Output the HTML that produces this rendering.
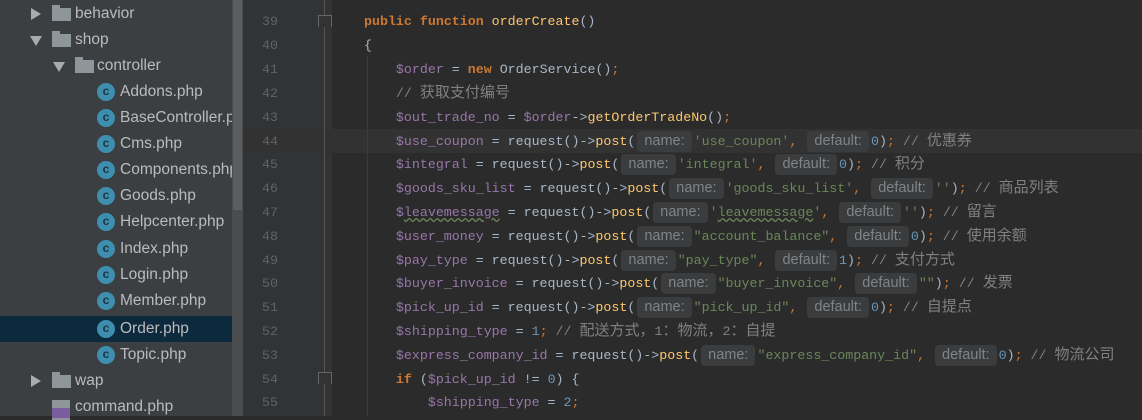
<!DOCTYPE html><html><head><style>
body{margin:0;width:1142px;height:416px;overflow:hidden;background:#2b2b2b;position:relative;font-family:"Liberation Sans",sans-serif}
#side{position:absolute;left:0;top:0;width:232px;height:416px;background:#3c3f41}
#sb{position:absolute;left:232px;top:0;width:11px;height:416px;background:#4a4d4f}
#sbt{position:absolute;left:233px;top:0;width:9px;height:210px;background:#5b5e60}
#gut{position:absolute;left:243px;top:0;width:89px;height:416px;background:#313335}
.row{position:absolute;left:0;width:243px;height:26px;line-height:26px;color:#bbbbbb;font-size:15.5px;white-space:nowrap;overflow:hidden}
.sel{background:#0d293e}
.tri{position:absolute;width:0;height:0}
.tr{border-top:6px solid transparent;border-bottom:6px solid transparent;border-left:10px solid #a9abad;top:7px}
.td{border-left:6px solid transparent;border-right:6px solid transparent;border-top:10px solid #a9abad;top:9px}
.fold{position:absolute;width:19px;height:13px;background:#8f9699;top:7px}
.fold:before{content:"";position:absolute;left:0;top:-3px;width:8px;height:3px;background:#8f9699}
.ci{position:absolute;left:97px;top:4px;width:18px;height:18px;border-radius:50%;background:#3e8eaf;color:#1e3440;font-size:12px;line-height:17px;text-align:center;font-weight:bold}
.ln{position:absolute;left:262px;color:#606366;font-family:"Liberation Mono",monospace;font-size:13.3px;height:24px;line-height:24px;margin-top:1px}
.code{position:absolute;left:364px;font-family:"Liberation Mono","Noto Sans CJK SC",monospace;font-size:13.3px;color:#a9b7c6;white-space:pre;height:24px;line-height:24px;margin-top:1px}
.k{color:#cc7832;font-weight:bold}.v{color:#9876aa}.f{color:#ffc66d}.s{color:#6a8759}.c{color:#808080}.n{color:#6897bb}.o{color:#cc7832}
.c b{font-weight:normal;font-size:15px}
.h{display:inline-block;background:#3b3c3d;color:#7f8487;font-family:"Liberation Sans",sans-serif;font-size:14.5px;line-height:21px;padding:0 7px;border-radius:4px;margin:0 2px;vertical-align:0px}
.u{text-decoration:underline wavy #6a8759}
.fm{position:absolute;left:318px;width:12px;height:11px;border:1px solid #666;border-bottom:none;background:#313335}
</style></head><body>
<div id="side">
<div class="row" style="top:1px"><div class="tri tr" style="left:31px"></div><div class="fold" style="left:52px"></div><span style="position:absolute;left:75px">behavior</span></div>
<div class="row" style="top:27px"><div class="tri td" style="left:30px"></div><div class="fold" style="left:52px"></div><span style="position:absolute;left:75px">shop</span></div>
<div class="row" style="top:53px"><div class="tri td" style="left:53px"></div><div class="fold" style="left:75px"></div><span style="position:absolute;left:97px">controller</span></div>
<div class="row" style="top:79px"><div class="ci">c</div><span style="position:absolute;left:120px">Addons.php</span></div>
<div class="row" style="top:105px"><div class="ci">c</div><span style="position:absolute;left:120px">BaseController.php</span></div>
<div class="row" style="top:131px"><div class="ci">c</div><span style="position:absolute;left:120px">Cms.php</span></div>
<div class="row" style="top:157px"><div class="ci">c</div><span style="position:absolute;left:120px">Components.php</span></div>
<div class="row" style="top:183px"><div class="ci">c</div><span style="position:absolute;left:120px">Goods.php</span></div>
<div class="row" style="top:209px"><div class="ci">c</div><span style="position:absolute;left:120px">Helpcenter.php</span></div>
<div class="row" style="top:236px"><div class="ci">c</div><span style="position:absolute;left:120px">Index.php</span></div>
<div class="row" style="top:262px"><div class="ci">c</div><span style="position:absolute;left:120px">Login.php</span></div>
<div class="row" style="top:288px"><div class="ci">c</div><span style="position:absolute;left:120px">Member.php</span></div>
<div class="row sel" style="top:316px"><div class="ci">c</div><span style="position:absolute;left:120px">Order.php</span></div>
<div class="row" style="top:342px"><div class="ci">c</div><span style="position:absolute;left:120px">Topic.php</span></div>
<div class="row" style="top:368px"><div class="tri tr" style="left:31px"></div><div class="fold" style="left:52px"></div><span style="position:absolute;left:75px">wap</span></div>
<div class="row" style="top:394px"><div style="position:absolute;left:52px;top:6px;width:18px;height:20px;background:#8f9699"></div><div style="position:absolute;left:52px;top:14px;width:18px;height:10px;background:#7a5d9c"></div><span style="position:absolute;left:75px">command.php</span></div>
</div>
<div id="sb"></div><div id="sbt"></div>
<div id="gut"></div>
<div style="position:absolute;left:243px;top:129px;width:899px;height:24px;background:#323232"></div>
<div style="position:absolute;left:324px;top:0;width:1px;height:416px;background:#555"></div>
<div class="fm" style="top:15px"></div>
<div class="fm" style="top:372px"></div>
<div style="position:absolute;left:367px;top:56px;width:1px;height:360px;background:#3b3b3b"></div>

<div class="ln" style="top:9px">39</div><div class="ln" style="top:33px">40</div><div class="ln" style="top:57px">41</div><div class="ln" style="top:81px">42</div><div class="ln" style="top:105px">43</div><div class="ln" style="top:129px">44</div><div class="ln" style="top:152px">45</div><div class="ln" style="top:176px">46</div><div class="ln" style="top:200px">47</div><div class="ln" style="top:224px">48</div><div class="ln" style="top:248px">49</div><div class="ln" style="top:271px">50</div><div class="ln" style="top:295px">51</div><div class="ln" style="top:319px">52</div><div class="ln" style="top:343px">53</div><div class="ln" style="top:367px">54</div><div class="ln" style="top:390px">55</div>

<div class="code" style="top:9px"><span class="k">public function </span><span class="f">orderCreate</span>()</div>
<div class="code" style="top:33px">{</div>
<div class="code" style="top:57px">    <span class="v">$order</span> = <span class="k">new </span>OrderService()<span class="o">;</span></div>
<div class="code" style="top:81px">    <span class="c">// <b>获取支付编号</b></span></div>
<div class="code" style="top:105px">    <span class="v">$out_trade_no</span> = <span class="v">$order</span>-><span class="f">getOrderTradeNo</span>()<span class="o">;</span></div>
<div class="code" style="top:129px">    <span class="v">$use_coupon</span> = request()-><span class="f">post</span>(<span class="h">name:</span><span class="s">'use_coupon'</span><span class="o">,</span> <span class="h">default:</span><span class="n">0</span>)<span class="o">;</span> <span class="c">// <b>优惠券</b></span></div>
<div class="code" style="top:152px">    <span class="v">$integral</span> = request()-><span class="f">post</span>(<span class="h">name:</span><span class="s">'integral'</span><span class="o">,</span> <span class="h">default:</span><span class="n">0</span>)<span class="o">;</span> <span class="c">// <b>积分</b></span></div>
<div class="code" style="top:176px">    <span class="v">$goods_sku_list</span> = request()-><span class="f">post</span>(<span class="h">name:</span><span class="s">'goods_sku_list'</span><span class="o">,</span> <span class="h">default:</span><span class="s">''</span>)<span class="o">;</span> <span class="c">// <b>商品列表</b></span></div>
<div class="code" style="top:200px">    <span class="v">$<span class="u">leavemessage</span></span> = request()-><span class="f">post</span>(<span class="h">name:</span><span class="s">'<span class="u">leavemessage</span>'</span><span class="o">,</span> <span class="h">default:</span><span class="s">''</span>)<span class="o">;</span> <span class="c">// <b>留言</b></span></div>
<div class="code" style="top:224px">    <span class="v">$user_money</span> = request()-><span class="f">post</span>(<span class="h">name:</span><span class="s">"account_balance"</span><span class="o">,</span> <span class="h">default:</span><span class="n">0</span>)<span class="o">;</span> <span class="c">// <b>使用余额</b></span></div>
<div class="code" style="top:248px">    <span class="v">$pay_type</span> = request()-><span class="f">post</span>(<span class="h">name:</span><span class="s">"pay_type"</span><span class="o">,</span> <span class="h">default:</span><span class="n">1</span>)<span class="o">;</span> <span class="c">// <b>支付方式</b></span></div>
<div class="code" style="top:271px">    <span class="v">$buyer_invoice</span> = request()-><span class="f">post</span>(<span class="h">name:</span><span class="s">"buyer_invoice"</span><span class="o">,</span> <span class="h">default:</span><span class="s">""</span>)<span class="o">;</span> <span class="c">// <b>发票</b></span></div>
<div class="code" style="top:295px">    <span class="v">$pick_up_id</span> = request()-><span class="f">post</span>(<span class="h">name:</span><span class="s">"pick_up_id"</span><span class="o">,</span> <span class="h">default:</span><span class="n">0</span>)<span class="o">;</span> <span class="c">// <b>自提点</b></span></div>
<div class="code" style="top:319px">    <span class="v">$shipping_type</span> = <span class="n">1</span><span class="o">;</span> <span class="c">// <b>配送方式，</b>1<b>：物流，</b>2<b>：自提</b></span></div>
<div class="code" style="top:343px">    <span class="v">$express_company_id</span> = request()-><span class="f">post</span>(<span class="h">name:</span><span class="s">"express_company_id"</span><span class="o">,</span> <span class="h">default:</span><span class="n">0</span>)<span class="o">;</span> <span class="c">// <b>物流公司</b></span></div>
<div class="code" style="top:367px">    <span class="k">if </span>(<span class="v">$pick_up_id</span> != <span class="n">0</span>) {</div>
<div class="code" style="top:390px">        <span class="v">$shipping_type</span> = <span class="n">2</span><span class="o">;</span></div>
</body></html>
